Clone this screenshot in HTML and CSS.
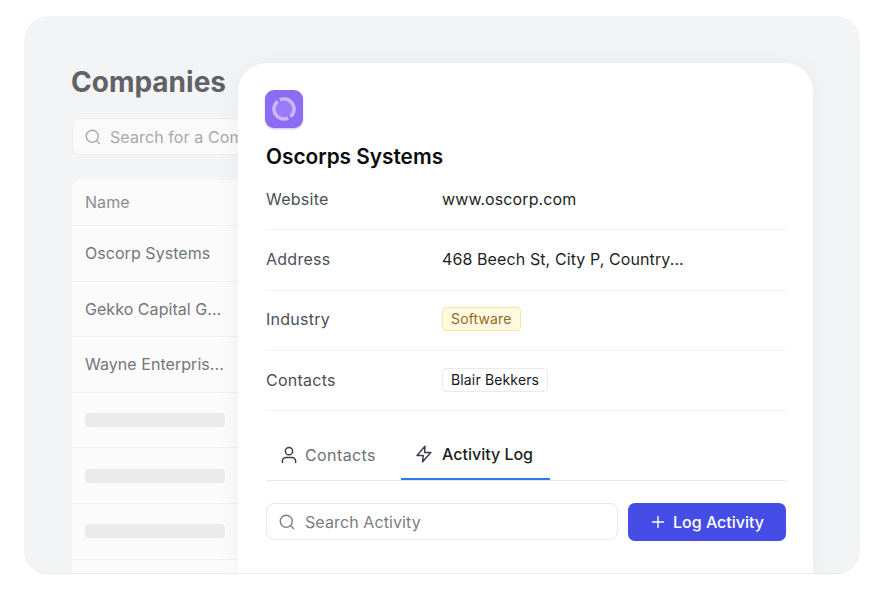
FILE: index.html
```html
<!DOCTYPE html>
<html lang="en">
<head>
    <meta charset="UTF-8">
    <meta name="viewport" content="width=device-width, initial-scale=1.0">
    <title>Companies</title>
    <link rel="stylesheet" href="styles.css">
</head>
<body>
    <div class="stage">
        <div class="companies">
            <h1 class="companies-title">Companies</h1>
            <div class="companies-search">
                <svg class="icon" viewBox="0 0 20 20"><circle cx="9.2" cy="9.2" r="6.7"/><path d="M14.2 14.2 17.2 17.2"/></svg>
                <span>Search for a Company</span>
            </div>
            <div class="table">
                <div class="table-row table-head">Name</div>
                <div class="table-row">Oscorp Systems</div>
                <div class="table-row">Gekko Capital G...</div>
                <div class="table-row">Wayne Enterpris...</div>
                <div class="table-row"><div class="placeholder"></div></div>
                <div class="table-row"><div class="placeholder"></div></div>
                <div class="table-row"><div class="placeholder"></div></div>
                <div class="table-row"></div>
            </div>
        </div>

        <div class="card">
            <div class="logo">
                <svg viewBox="0 0 38 38" width="38" height="38">
                    <circle cx="19" cy="19" r="8" fill="#9a7df6"/>
                    <circle class="logo-ring" cx="19" cy="19" r="10" pathLength="100"/>
                </svg>
            </div>
            <h2 class="card-title">Oscorps Systems</h2>

            <div class="fields">
                <div class="field">
                    <span class="field-label">Website</span>
                    <span class="field-value">www.oscorp.com</span>
                </div>
                <div class="field">
                    <span class="field-label">Address</span>
                    <span class="field-value">468 Beech St, City P, Country...</span>
                </div>
                <div class="field">
                    <span class="field-label">Industry</span>
                    <span class="tag tag-yellow">Software</span>
                </div>
                <div class="field">
                    <span class="field-label">Contacts</span>
                    <span class="tag">Blair Bekkers</span>
                </div>
            </div>

            <div class="tabs">
                <div class="tab">
                    <svg class="icon" viewBox="0 0 20 20"><circle cx="10" cy="6.2" r="3.6"/><path d="M3.4 17.4v-1.4a3.6 3.6 0 0 1 3.6-3.6h6a3.6 3.6 0 0 1 3.6 3.6v1.4"/></svg>
                    <span>Contacts</span>
                </div>
                <div class="tab active">
                    <svg class="icon" viewBox="0 0 20 20"><path d="M11 2.2 3 11.4h6.2L8.6 17.8l8.2-9.4h-6.2z"/></svg>
                    <span>Activity Log</span>
                </div>
            </div>

            <div class="actions">
                <div class="activity-search">
                    <svg class="icon" viewBox="0 0 20 20"><circle cx="9.2" cy="9.2" r="6.7"/><path d="M14.2 14.2 17.2 17.2"/></svg>
                    <span>Search Activity</span>
                </div>
                <button class="btn">
                    <svg class="icon" viewBox="0 0 20 20"><path d="M10 3.8v12.4M3.8 10h12.4"/></svg>
                    Log Activity
                </button>
            </div>
        </div>
    </div>
</body>
</html>
```

FILE: styles.css
```css
* {
    margin: 0;
    padding: 0;
    box-sizing: border-box;
}

body {
    font-family: Inter, 'Liberation Sans', sans-serif;
    background: #ffffff;
    padding: 16px 20px 16px 24px;
    height: 590px;
    overflow: hidden;
}

.stage {
    position: relative;
    height: 558px;
    background: #f3f4f6;
    border-bottom: 1px solid #e6e8ea;
    border-radius: 24px;
    overflow: hidden;
    padding: 47px 0 0 47px;
}

.icon {
    width: 18px;
    height: 18px;
    fill: none;
    stroke: currentColor;
    stroke-width: 1.5;
    stroke-linecap: round;
    stroke-linejoin: round;
    flex-shrink: 0;
}

/* background list */
.companies {
    width: 500px;
}

.companies-title {
    font-size: 28px;
    line-height: 38px;
    font-weight: 700;
    color: #5f6266;
}

.companies-search {
    display: flex;
    align-items: center;
    gap: 8px;
    height: 37px;
    margin-top: 17px;
    margin-left: 1px;
    padding-left: 11px;
    background: #fafafb;
    border: 1px solid #eceef0;
    border-radius: 8px;
    font-size: 16px;
    letter-spacing: 0.1px;
    color: #a6a9ad;
}

.table {
    margin-top: 25px;
    margin-left: 1px;
    background: #fbfbfc;
    border-radius: 8px 8px 0 0;
}

.table-row {
    display: flex;
    align-items: center;
    height: 55.6px;
    padding-left: 13px;
    border-bottom: 1px solid #eef0f2;
    font-size: 16px;
    letter-spacing: 0.05px;
    color: #73767a;
}

.table-head {
    height: 46px;
    padding-bottom: 2px;
    color: #8a8d91;
}

.placeholder {
    width: 140px;
    height: 14px;
    background: #e9ebed;
    border-radius: 4px;
}

/* detail card */
.card {
    position: absolute;
    left: 214px;
    top: 47px;
    width: 575px;
    height: 511px;
    background: #ffffff;
    border-radius: 28px 28px 0 0;
    box-shadow: 0 0 24px rgba(17, 24, 39, 0.05);
    padding: 27px 27px 0 28px;
}

.logo {
    width: 38px;
    height: 38px;
    margin-left: -1px;
    background: #8b6cf3;
    border-radius: 9px;
    box-shadow: 0 1px 2px rgba(76, 50, 180, 0.3);
}

.logo svg {
    display: block;
}

.logo-ring {
    fill: none;
    stroke: #c9b8fb;
    stroke-width: 3.6;
    stroke-dasharray: 46 4;
    stroke-dashoffset: -18;
}

.card-title {
    margin-top: 15px;
    font-size: 20.8px;
    line-height: 28px;
    font-weight: 600;
    color: #0b0c0e;
}

.fields {
    margin-top: -1px;
}

.field {
    display: flex;
    align-items: center;
    height: 60.3px;
    padding-bottom: 1.5px;
    border-bottom: 1px solid #f1f2f4;
    font-size: 16px;
}

.field-label {
    width: 176px;
    letter-spacing: 0.25px;
    color: #4b5058;
}

.field-value {
    letter-spacing: 0.1px;
    color: #1c1f24;
}

.tag {
    padding: 2px 8px;
    font-size: 14px;
    line-height: 18px;
    letter-spacing: 0.15px;
    color: #16181c;
    background: #ffffff;
    border: 1px solid #e8eaed;
    border-radius: 4px;
}

.tag-yellow {
    color: #96691f;
    background: #fff9e0;
    border-color: #f8e6a0;
}

.tabs {
    display: flex;
    margin-top: 21px;
    border-bottom: 1px solid #e5e7eb;
}

.tab {
    display: flex;
    align-items: center;
    gap: 6px;
    height: 48px;
    width: 135px;
    padding-left: 13px;
    padding-bottom: 2px;
    font-size: 16px;
    letter-spacing: 0.4px;
    color: #6b7077;
}

.tab .icon {
    width: 20px;
    height: 20px;
    color: #3c4148;
}

.tab.active {
    width: 149px;
    gap: 8px;
    letter-spacing: 0;
    color: #1c1f24;
    font-weight: 500;
    border-bottom: 2px solid #2b7de9;
    margin-bottom: -1px;
}

.actions {
    display: flex;
    gap: 10px;
    margin-top: 22px;
}

.activity-search {
    display: flex;
    align-items: center;
    gap: 9px;
    flex: 1;
    height: 37px;
    padding-left: 11px;
    border: 1px solid #e5e7eb;
    border-radius: 8px;
    font-size: 16px;
    letter-spacing: 0.1px;
    color: #797e85;
}

.btn {
    display: flex;
    align-items: center;
    justify-content: center;
    gap: 6px;
    width: 158px;
    height: 38px;
    padding-right: 1px;
    background: #464de6;
    color: #ffffff;
    border: none;
    border-radius: 7px;
    font-family: inherit;
    font-size: 16px;
    font-weight: 500;
}
```
